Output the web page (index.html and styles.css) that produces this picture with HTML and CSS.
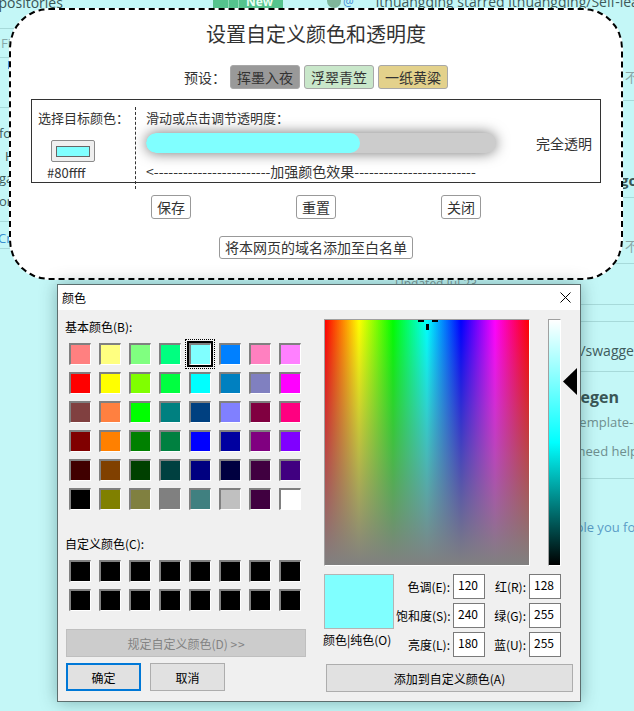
FILE: index.html
```html
<!DOCTYPE html>
<html lang="zh-CN">
<head>
<meta charset="utf-8">
<title>设置自定义颜色和透明度</title>
<link rel="stylesheet" href="styles.css">
</head>
<body>
<div class="page">
  <aside class="rail">
    <div class="rail-head">
      <span class="rail-title">Repositories</span>
      <span class="new-btn"><i></i><i></i><b>New</b></span>
    </div>
    <div class="rail-find">Find a repository…</div>
    <div class="rail-mark"></div>
    <ul class="rail-list">
      <li>for</li>
      <li class="ind">H</li>
      <li>ga</li>
      <li>orl</li>
    </ul>
    <div class="rail-more">Create</div>
  </aside>
  <section class="feed">
    <div class="f-top"><span class="avatar"></span><span class="at">@</span><span class="f-top-text">ithuangqing starred ithuangqing/Self-learning</span></div>
    <div class="f-row f-a"><span class="muted">不感兴趣</span></div>
    <div class="f-row f-b line"><span class="strong">go</span></div>
    <div class="f-row f-c line"><span class="muted">不感兴趣</span></div>
    <div class="f-row f-d line"><span class="small">Updated Jul 23</span></div>
    <div class="f-row f-e line"></div>
    <div class="f-row f-f line"><span class="repo">swagger-api/swagger-codegen</span></div>
    <div class="f-row f-g line">
      <span class="repo-big">swagger-codegen</span>
      <span class="desc desc-1">swagger-codegen contains a template-driven engine</span>
      <span class="desc desc-2">please let us know if you need help</span>
    </div>
    <div class="f-row f-h line"></div>
    <div class="f-row f-i"><span class="link">Discover interesting projects and people you follow</span></div>
  </section>
</div>

<div class="panel">
  <h1 class="panel-title">设置自定义颜色和透明度</h1>
  <div class="presets">
    <span class="presets-label">预设：</span>
    <button class="preset preset-ink">挥墨入夜</button>
    <button class="preset preset-jade">浮翠青笠</button>
    <button class="preset preset-paper">一纸黄粱</button>
  </div>
  <div class="box">
    <div class="pick">
      <div class="pick-label">选择目标颜色：</div>
      <button class="swatch"><span class="swatch-fill"></span></button>
      <div class="hex">#80ffff</div>
    </div>
    <div class="adjust">
      <div class="adjust-label">滑动或点击调节透明度：</div>
      <div class="slider-row">
        <div class="slider"><div class="slider-fill" style="width:61%"></div></div>
        <span class="clear-label">完全透明</span>
      </div>
      <div class="hint">&lt;------------------------加强颜色效果-------------------------</div>
    </div>
  </div>
  <div class="actions">
    <button class="btn">保存</button>
    <button class="btn">重置</button>
    <button class="btn">关闭</button>
  </div>
  <button class="btn whitelist">将本网页的域名添加至白名单</button>
</div>

<div class="dialog">
  <div class="dlg-title">
    <span>颜色</span>
    <svg class="dlg-close" width="11" height="11" viewBox="0 0 11 11"><path d="M0.5 0.5 L10.5 10.5 M10.5 0.5 L0.5 10.5" stroke="#000" stroke-width="1" fill="none"/></svg>
  </div>
  <div class="dlg-body">
    <div class="dlg-left">
      <div class="dlg-label">基本颜色(B):</div>
      <div class="cells">
        <span class="cell" style="background:#ff8080"></span>
        <span class="cell" style="background:#ffff80"></span>
        <span class="cell" style="background:#80ff80"></span>
        <span class="cell" style="background:#00ff80"></span>
        <span class="cell sel" style="background:#80ffff"></span>
        <span class="cell" style="background:#0080ff"></span>
        <span class="cell" style="background:#ff80c0"></span>
        <span class="cell" style="background:#ff80ff"></span>
        <span class="cell" style="background:#ff0000"></span>
        <span class="cell" style="background:#ffff00"></span>
        <span class="cell" style="background:#80ff00"></span>
        <span class="cell" style="background:#00ff40"></span>
        <span class="cell" style="background:#00ffff"></span>
        <span class="cell" style="background:#0080c0"></span>
        <span class="cell" style="background:#8080c0"></span>
        <span class="cell" style="background:#ff00ff"></span>
        <span class="cell" style="background:#804040"></span>
        <span class="cell" style="background:#ff8040"></span>
        <span class="cell" style="background:#00ff00"></span>
        <span class="cell" style="background:#008080"></span>
        <span class="cell" style="background:#004080"></span>
        <span class="cell" style="background:#8080ff"></span>
        <span class="cell" style="background:#800040"></span>
        <span class="cell" style="background:#ff0080"></span>
        <span class="cell" style="background:#800000"></span>
        <span class="cell" style="background:#ff8000"></span>
        <span class="cell" style="background:#008000"></span>
        <span class="cell" style="background:#008040"></span>
        <span class="cell" style="background:#0000ff"></span>
        <span class="cell" style="background:#0000a0"></span>
        <span class="cell" style="background:#800080"></span>
        <span class="cell" style="background:#8000ff"></span>
        <span class="cell" style="background:#400000"></span>
        <span class="cell" style="background:#804000"></span>
        <span class="cell" style="background:#004000"></span>
        <span class="cell" style="background:#004040"></span>
        <span class="cell" style="background:#000080"></span>
        <span class="cell" style="background:#000040"></span>
        <span class="cell" style="background:#400040"></span>
        <span class="cell" style="background:#400080"></span>
        <span class="cell" style="background:#000000"></span>
        <span class="cell" style="background:#808000"></span>
        <span class="cell" style="background:#808040"></span>
        <span class="cell" style="background:#808080"></span>
        <span class="cell" style="background:#408080"></span>
        <span class="cell" style="background:#c0c0c0"></span>
        <span class="cell" style="background:#400040"></span>
        <span class="cell" style="background:#ffffff"></span>
      </div>
      <div class="dlg-label custom-label">自定义颜色(C):</div>
      <div class="cells custom">
        <span class="cell"></span><span class="cell"></span><span class="cell"></span><span class="cell"></span>
        <span class="cell"></span><span class="cell"></span><span class="cell"></span><span class="cell"></span>
        <span class="cell"></span><span class="cell"></span><span class="cell"></span><span class="cell"></span>
        <span class="cell"></span><span class="cell"></span><span class="cell"></span><span class="cell"></span>
      </div>
      <button class="wbtn define" disabled>规定自定义颜色(D) &gt;&#8202;&gt;</button>
      <div class="dlg-buttons">
        <button class="wbtn ok">确定</button>
        <button class="wbtn">取消</button>
      </div>
    </div>
    <div class="dlg-right">
      <div class="spec-row">
        <div class="spectrum"><i class="ch ch-l"></i><i class="ch ch-r"></i><i class="ch ch-v"></i></div>
        <div class="lum"></div>
        <div class="lum-arrow"><svg width="14" height="27" viewBox="0 0 14 27"><polygon points="14,0 0,13.5 14,27" fill="#000"/></svg></div>
      </div>
      <div class="lower">
        <div class="preview-col">
          <div class="preview"></div>
          <div class="preview-label">颜色|纯色(O)</div>
        </div>
        <div class="fields">
          <label>色调(E):</label><span class="field">120</span><label>红(R):</label><span class="field">128</span>
          <label>饱和度(S):</label><span class="field">240</span><label>绿(G):</label><span class="field">255</span>
          <label>亮度(L):</label><span class="field">180</span><label>蓝(U):</label><span class="field">255</span>
        </div>
      </div>
      <button class="wbtn add">添加到自定义颜色(A)</button>
    </div>
  </div>
</div>
</body>
</html>
```

FILE: styles.css
```css
* { box-sizing: border-box; }
html, body { margin: 0; padding: 0; }
body {
  width: 634px;
  height: 711px;
  overflow: hidden;
  position: relative;
  background: #c4f7f7;
  font-family: "Noto Sans CJK SC", "Noto Sans", sans-serif;
}
button { font-family: inherit; cursor: default; }

/* ---------- background page ---------- */
.page {
  display: grid;
  grid-template-columns: 290px 420px;
  height: 711px;
  font-family: "Open Sans", "Noto Sans", "Noto Sans CJK SC", sans-serif;
  font-size: 14px;
  color: #3f5c5c;
}
.rail { display: flex; flex-direction: column; }
.rail-head {
  display: flex;
  align-items: center;
  justify-content: space-between;
  height: 22px;
  margin-top: -9px;
}
.rail-title { margin-left: -18px; color: #3a5656; }
.new-btn {
  display: flex;
  width: 70px;
  height: 22px;
  margin-right: 7px;
  background: #55c38d;
  border-radius: 3px;
}
.new-btn i { width: 16px; border-right: 1px solid #8fdcb6; }
.new-btn i + i { width: 10px; }
.new-btn b { margin-left: 7px; color: #e9fff4; font-size: 12px; line-height: 22px; }
.rail-find {
  margin: 15px 10px 0 -8px;
  height: 30px;
  border: 1px solid #a7dada;
  border-radius: 3px;
  padding-left: 8px;
  line-height: 28px;
  font-size: 13px;
  color: #86a9a9;
}
.rail-mark { margin: 3px 0 0 8px; width: 2px; height: 8px; background: #4a8fd6; }
.rail-list {
  list-style: none;
  margin: 38px 0 0;
  padding: 14px 0 0;
  border-top: 1px solid #a7dada;
  line-height: 22.5px;
  font-size: 13px;
  color: #3f5c5c;
}
.rail-list li { margin-left: -1px; }
.rail-list li.ind { margin-left: 5px; }
.rail-more {
  margin-top: 9px;
  padding-top: 7px;
  border-top: 1px solid #a7dada;
  border-bottom: 1px solid #a7dada;
  height: 28px;
  line-height: 18px;
  font-size: 13px;
  color: #3b8fd0;
  margin-left: -2px;
}

.feed { display: flex; flex-direction: column; }
.f-top { display: flex; align-items: center; height: 22px; margin-top: -10px; white-space: nowrap; }
.avatar { width: 14px; height: 14px; margin-left: 37px; border-radius: 50%; background: #7fb59a; }
.at { margin-left: 2px; color: #4a8fd6; font-size: 12px; }
.f-top-text { margin-left: 22px; color: #3f5a5a; }
.f-row { white-space: nowrap; display: flex; flex-direction: column; align-items: flex-start; }
.f-row.line { border-top: 1px solid #a7dada; }
.f-a { height: 88px; padding: 56px 0 0 335px; }
.f-b { height: 97px; padding: 70px 0 0 330px; }
.f-c { height: 66px; padding: 39px 0 0 335px; }
.f-d { height: 41px; padding: 11px 0 0 105px; }
.f-e { height: 17px; }
.f-f { height: 50px; padding: 20px 0 0 212px; }
.f-g { height: 107px; padding: 15px 0 0 191px; }
.f-h { height: 16px; }
.f-i { padding: 24px 0 0 60px; }
.muted { line-height: 18px; color: #8aa6a6; font-size: 13px; }
.strong { line-height: 18px; font-weight: 700; color: #3a5656; font-size: 15px; }
.small { line-height: 18px; font-size: 12px; color: #7d9c9c; }
.repo { line-height: 18px; font-size: 14px; color: #3f5c5c; }
.repo-big { line-height: 20px; font-size: 16px; font-weight: 700; color: #3a5656; }
.desc { line-height: 18px; font-size: 13px; color: #6f8f8f; }
.desc-1 { margin: 6px 0 0 -81px; }
.desc-2 { margin: 11px 0 0 -55px; }
.link { line-height: 18px; font-size: 13px; color: #5a9cc6; }

/* ---------- settings panel (overlay) ---------- */
.panel {
  position: absolute;
  left: 9px;
  top: 8px;
  width: 614px;
  height: 272px;
  border: 2px dashed #000;
  border-radius: 40px;
  background: #fff;
  display: flex;
  flex-direction: column;
  align-items: center;
  color: #333;
  font-size: 14px;
}
.panel-title { margin: 10px 0 0; font-size: 20px; font-weight: 400; line-height: 28px; }
.presets { display: flex; align-items: center; height: 24px; margin-top: 17px; }
.presets-label { line-height: 24px; }
.preset {
  height: 24px;
  margin-left: 4px;
  padding: 0 6px;
  border: 1px solid #a8a8a8;
  border-radius: 3px;
  font-size: 14px;
  line-height: 22px;
  color: #333;
}
.preset-ink { background: #999999; }
.preset-jade { background: #c9e7ca; }
.preset-paper { background: #e3d18b; }

.box {
  align-self: stretch;
  margin: 10px 20px 0;
  height: 84px;
  border: 1px solid #333;
  display: flex;
  font-size: 13px;
}
.pick { width: 103px; display: flex; flex-direction: column; align-items: flex-start; }
.pick-label { align-self: center; margin-top: 9px; line-height: 18px; white-space: nowrap; }
.swatch {
  margin: 13px 0 0 19px;
  width: 44px;
  height: 22px;
  padding: 5px 4px 4px;
  border: 1px solid #8a8a8a;
  border-radius: 2px;
  background: #efefef;
}
.swatch-fill { display: block; height: 100%; background: #80ffff; border: 1px solid #666; }
.hex { margin: 3px 0 0 15px; line-height: 16px; font-size: 13px; }
.adjust {
  flex: 1;
  margin: 7px 0 -7px;
  padding: 0 8px 0 10px;
  border-left: 1px dashed #333;
  display: flex;
  flex-direction: column;
}
.adjust-label { margin-top: 2px; line-height: 18px; }
.slider-row { display: flex; align-items: center; height: 20px; margin-top: 6px; }
.slider {
  width: 350px;
  height: 20px;
  border-radius: 10px;
  background: #ccc;
  box-shadow: 0 0 14px rgba(0, 0, 0, 0.55);
  overflow: hidden;
}
.slider-fill { height: 100%; background: #80ffff; border-radius: 10px; }
.clear-label { margin-left: auto; font-size: 14px; }
.hint { margin-top: 9px; line-height: 18px; font-size: 14px; white-space: nowrap; }

.actions { display: flex; gap: 105px; margin-top: 12px; }
.btn {
  height: 24px;
  padding: 0 5px;
  border: 1px solid #999;
  border-radius: 3px;
  background: #fff;
  font-size: 14px;
  line-height: 22px;
  color: #333;
}
.whitelist { margin-top: 17px; height: 23px; line-height: 21px; }

/* ---------- Windows colour dialog (overlay) ---------- */
.dialog {
  position: absolute;
  left: 57px;
  top: 284px;
  width: 524px;
  height: 418px;
  border: 1px solid #5c6e6e;
  background: #f0f0f0;
  box-shadow: 0 0 16px rgba(0, 50, 50, 0.35);
  display: flex;
  flex-direction: column;
  font-size: 12px;
  color: #000;
}
.dlg-title {
  flex: none;
  height: 25px;
  background: #fff;
  display: flex;
  align-items: center;
  justify-content: space-between;
  padding: 0 9px 0 4px;
}
.dlg-body { flex: 1; display: flex; }
.dlg-left { width: 266px; padding-left: 8px; display: flex; flex-direction: column; align-items: flex-start; }
.dlg-label { margin: 9px 0 0 -1px; line-height: 16px; white-space: nowrap; }
.custom-label { margin-top: 26px; }
.cells {
  display: grid;
  grid-template-columns: repeat(8, 22px);
  grid-auto-rows: 22px;
  column-gap: 8px;
  row-gap: 7px;
  margin: 8px 0 0 3px;
}
.cell {
  border-style: solid;
  border-width: 2px 1px 1px 2px;
  border-color: #808080 #fff #fff #808080;
  background: #000;
}
.cell.sel { position: relative; outline: 2px solid #000; }
.cell.sel::after {
  content: "";
  position: absolute;
  top: -6px;
  left: -6px;
  right: -5px;
  bottom: -5px;
  border: 1px dotted #000;
}
.wbtn {
  height: 28px;
  border: 1px solid #adadad;
  background: #e1e1e1;
  font-size: 12px;
  color: #000;
  padding: 0;
}
.define { margin-top: 18px; width: 240px; background: #cccccc; border-color: #bfbfbf; color: #838383; }
.dlg-buttons { display: flex; gap: 9px; margin-top: 6px; }
.dlg-buttons .wbtn { width: 75px; }
.wbtn.ok { border: 2px solid #0078d7; }

.dlg-right { width: 256px; display: flex; flex-direction: column; align-items: flex-start; }
.spec-row { display: flex; height: 247px; margin-top: 9px; }
.spectrum {
  position: relative;
  width: 206px;
  height: 247px;
  border: 1px solid;
  border-color: #a0a0a0 #fff #fff #a0a0a0;
  background:
    linear-gradient(to bottom, rgba(128, 128, 128, 0) 0%, #808080 100%),
    linear-gradient(to right, #ff0000 0%, #ffff00 16.67%, #00ff00 33.33%, #00ffff 50%, #0000ff 66.67%, #ff00ff 83.33%, #ff0000 100%);
}
.ch { position: absolute; background: #000; }
.ch-l { left: 93px; top: 0; width: 6px; height: 2px; }
.ch-r { left: 107px; top: 0; width: 6px; height: 2px; }
.ch-v { left: 101px; top: 4px; width: 3px; height: 6px; }
.lum {
  width: 13px;
  margin-left: 18px;
  border: 1px solid;
  border-color: #a0a0a0 #fff #fff #a0a0a0;
  background: linear-gradient(to bottom, #ffffff 0%, #00ffff 50%, #000000 100%);
}
.lum-arrow { margin-left: 2px; padding-top: 49px; }
.lum-arrow svg { display: block; }
.lower { display: flex; margin-top: 8px; }
.preview-col { width: 70px; }
.preview { height: 55px; background: #80ffff; border: 1px solid #b4b4b4; }
.preview-label { margin: 3px 0 0 -1px; line-height: 16px; white-space: nowrap; }
.fields {
  display: grid;
  grid-template-columns: 54px 32px 38px 32px;
  grid-auto-rows: 25px;
  column-gap: 3px;
  row-gap: 4px;
  margin-left: 2px;
}
.fields label { align-self: center; text-align: right; white-space: nowrap; }
.field { border: 1px solid #7a7a7a; background: #fff; padding-left: 4px; line-height: 20px; }
.add { width: 247px; margin: 7px 0 0 2px; }
```
